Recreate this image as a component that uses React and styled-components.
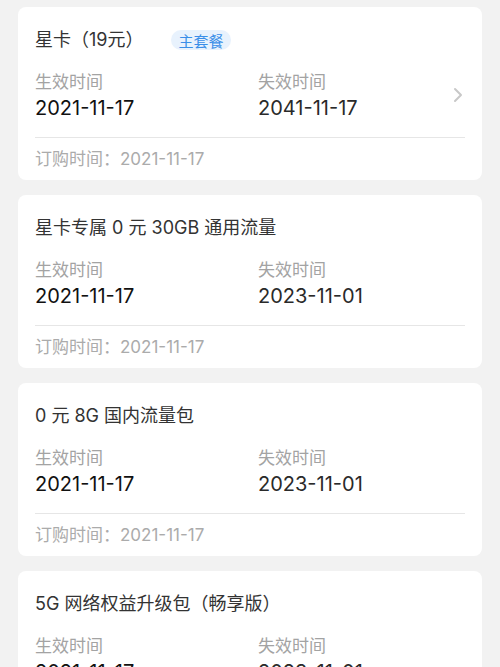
import React from 'react'
import styled, { createGlobalStyle } from 'styled-components'

const GlobalStyle = createGlobalStyle`
  html, body {
    margin: 0;
    padding: 0;
    background: #f2f2f2;
  }
  body {
    font-family: "Inter", "Noto Sans CJK SC", "Noto Sans", sans-serif;
    -webkit-font-smoothing: antialiased;
  }
`

const List = styled.div`
  display: flex;
  flex-direction: column;
  gap: 15px;
  padding: 7px 18px 20px;
`

const Card = styled.div`
  background: #fff;
  border-radius: 8px;
  padding: 21px 17px 10px;
  height: 173px;
  box-sizing: border-box;
`

const TitleRow = styled.div`
  display: flex;
  align-items: center;
  gap: 28px;
  height: 24px;
`

const Title = styled.div`
  font-size: 18px;
  line-height: 24px;
  color: #333;
`

const Badge = styled.span`
  display: inline-flex;
  align-items: center;
  justify-content: center;
  height: 20px;
  padding: 0 7px;
  border-radius: 10px;
  background: #e8f2fd;
  color: #3a8ee8;
  font-size: 15px;
`

const Info = styled.div`
  display: grid;
  grid-template-columns: 223px 1fr auto;
  align-items: center;
  margin-top: 19px;
`

const Col = styled.div`
  display: flex;
  flex-direction: column;
`

const Label = styled.div`
  font-size: 17px;
  line-height: 22px;
  color: #a3a3a3;
`

const DateText = styled.div`
  font-size: 20px;
  line-height: 28px;
  margin-top: 1px;
  color: ${p => (p.dim ? '#2a2a2a' : '#111')};
`

const Chevron = styled.svg`
  width: 10px;
  height: 16px;
  margin-right: 2px;
  margin-top: -3px;
`

const Divider = styled.div`
  height: 1px;
  background: #e6e6e6;
  margin-top: 15px;
`

const Ordered = styled.div`
  font-size: 17px;
  line-height: 22px;
  margin-top: 10px;
  color: #ababab;
`

const plans = [
  { name: '星卡（19元）', main: true, start: '2021-11-17', end: '2041-11-17', order: '2021-11-17' },
  { name: '星卡专属 0 元 30GB 通用流量', start: '2021-11-17', end: '2023-11-01', order: '2021-11-17' },
  { name: '0 元 8G 国内流量包', start: '2021-11-17', end: '2023-11-01', order: '2021-11-17' },
  { name: '5G 网络权益升级包（畅享版）', start: '2021-11-17', end: '2023-11-01', order: '2021-11-17' },
]

const PlanCard = ({ plan }) => (
  <Card>
    <TitleRow>
      <Title>{plan.name}</Title>
      {plan.main && <Badge>主套餐</Badge>}
    </TitleRow>
    <Info>
      <Col>
        <Label>生效时间</Label>
        <DateText>{plan.start}</DateText>
      </Col>
      <Col>
        <Label>失效时间</Label>
        <DateText dim>{plan.end}</DateText>
      </Col>
      {plan.main ? (
        <Chevron viewBox="0 0 10 16">
          <path d="M2 2l6 6-6 6" fill="none" stroke="#c8c8c8" strokeWidth="2" strokeLinecap="round" strokeLinejoin="round" />
        </Chevron>
      ) : <span />}
    </Info>
    <Divider />
    <Ordered>订购时间：{plan.order}</Ordered>
  </Card>
)

export default function App () {
  return (
    <>
      <GlobalStyle />
      <List>
        {plans.map(p => <PlanCard key={p.name} plan={p} />)}
      </List>
    </>
  )
}
